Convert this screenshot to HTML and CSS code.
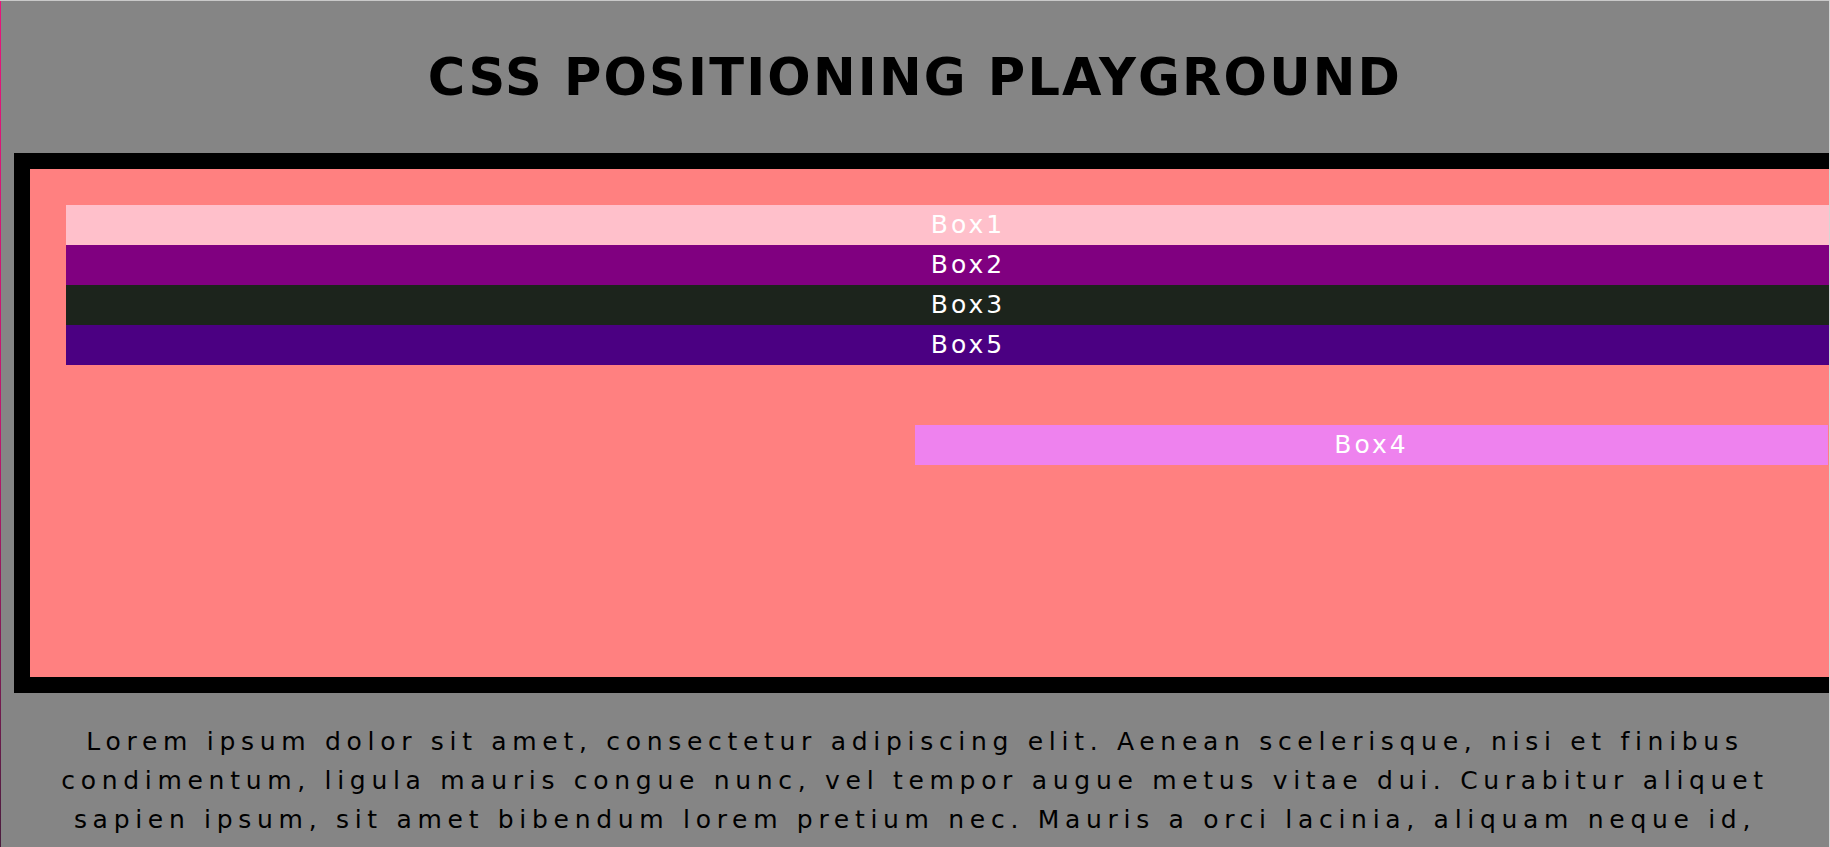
FILE: index.html
```html
<!DOCTYPE html>
<html lang="en">
<head>
<meta charset="utf-8">
<title>CSS Positioning Playground</title>
<link rel="stylesheet" href="styles.css">
</head>
<body>
  <h1 class="title">CSS POSITIONING PLAYGROUND</h1>
  <div class="playground">
    <div class="box box1">Box1</div>
    <div class="box box2">Box2</div>
    <div class="box box3">Box3</div>
    <div class="box box5">Box5</div>
    <div class="box box4">Box4</div>
  </div>
  <p class="text">Lorem ipsum dolor sit amet, consectetur adipiscing elit. Aenean scelerisque, nisi et finibus condimentum, ligula mauris congue nunc, vel tempor augue metus vitae dui. Curabitur aliquet sapien ipsum, sit amet bibendum lorem pretium nec. Mauris a orci lacinia, aliquam neque id, pellentesque urna. Vestibulum ante ipsum primis in faucibus orci luctus et ultrices posuere cubilia curae; Sed vitae lorem at nibh tristique tincidunt.</p>
</body>
</html>
```

FILE: styles.css
```css
html {
  overflow-x: hidden;
  background:
    linear-gradient(#c9c9c9, #c9c9c9) left top / 100% 1px no-repeat fixed,
    linear-gradient(to bottom, #e8157b 0%, #c2186f 50%, #4a1d3e 100%) left top / 1px 100% no-repeat fixed,
    #858585;
}

body {
  margin: 0;
  font-family: "DejaVu Sans", sans-serif;
  color: #000;
  overflow-x: hidden;
}

body::after {
  content: "";
  position: fixed;
  top: 0;
  right: 0;
  width: 1px;
  height: 100%;
  background: #d6d6d6;
}

.title {
  margin: 0;
  padding-top: 48px;
  font-size: 51px;
  line-height: 60px;
  font-weight: 700;
  letter-spacing: 2.2px;
  text-align: center;
}

.playground {
  position: relative;
  margin: 45px 0 0 14px;
  width: 1804px;
  height: 436px;
  padding: 36px;
  border: 16px solid #000;
  background: #ff8080;
}

.box {
  height: 40px;
  line-height: 40px;
  font-size: 25px;
  letter-spacing: 3px;
  color: #fff;
  text-align: center;
}

.box1 { background: #ffc0cb; }
.box2 { background: #800080; }
.box3 { background: #1c241c; }
.box5 { background: #4b0082; }

.box4 {
  position: absolute;
  top: 256px;
  left: 885px;
  width: 913px;
  background: #ee82ee;
}

.text {
  max-width: 1745px;
  margin: 29px auto 0;
  font-size: 25px;
  line-height: 39px;
  letter-spacing: 5.7px;
  text-align: center;
}
```
